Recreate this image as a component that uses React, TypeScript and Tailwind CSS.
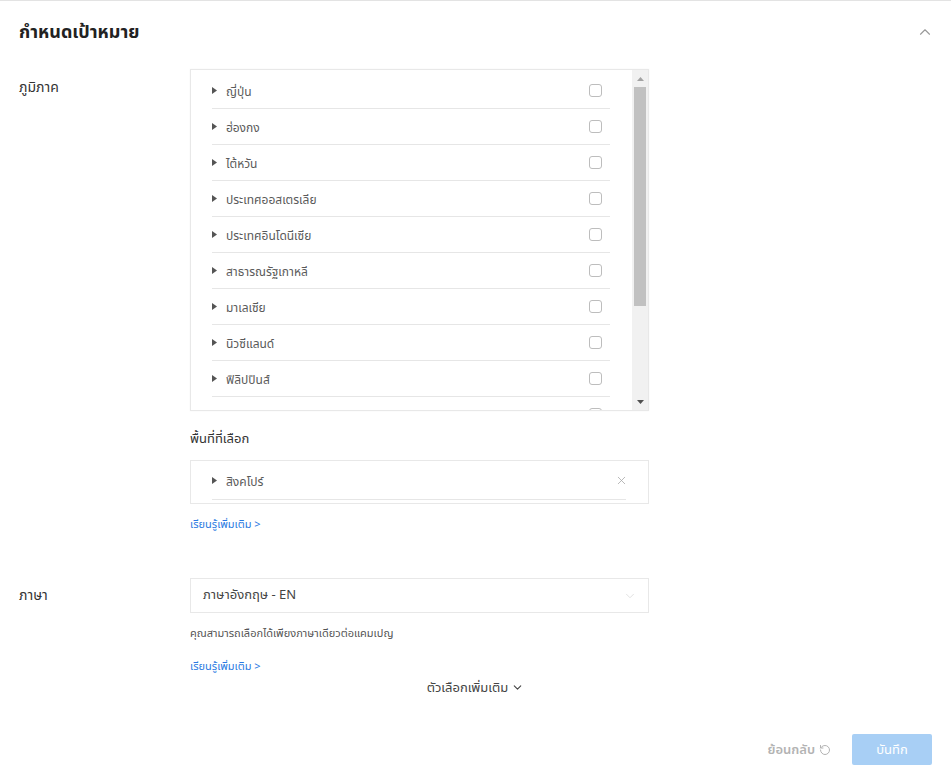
import { ChevronUp, ChevronDown, X, RotateCcw } from "lucide-react";

const regions = [
  "ญี่ปุ่น",
  "ฮ่องกง",
  "ไต้หวัน",
  "ประเทศออสเตรเลีย",
  "ประเทศอินโดนีเซีย",
  "สาธารณรัฐเกาหลี",
  "มาเลเซีย",
  "นิวซีแลนด์",
  "ฟิลิปปินส์",
  "สิงคโปร์",
];

function Caret() {
  return (
    <svg width="5" height="7" viewBox="0 0 5 7" className="shrink-0">
      <path d="M0 0 L5 3.5 L0 7 Z" fill="#555" />
    </svg>
  );
}

export default function App() {
  return (
    <main
      className="min-h-screen bg-white border-t border-[#e3e3e3] text-[#333]"
      style={{ fontFamily: '"Noto Sans", "Noto Sans Thai", "Noto Sans CJK SC", sans-serif' }}
    >
      {/* หัวข้อ */}
      <header className="h-[61px] flex items-center justify-between pl-[19px] pr-[17px]">
        <h1 className="text-[18px] font-bold text-[#222]">กำหนดเป้าหมาย</h1>
        <ChevronUp size={18} strokeWidth={1.5} className="text-[#999]" />
      </header>

      {/* ภูมิภาค */}
      <section className="flex mt-[7px]">
        <div className="w-[190px] shrink-0 pl-[19px] pt-[7px] text-[14px]">ภูมิภาค</div>
        <div className="w-[459px]">
          <div className="h-[342px] border border-[#e8e8e8] flex overflow-hidden shadow-[0_0_2px_rgba(0,0,0,0.04)]">
            <div className="flex-1 pl-[21px] pr-[22px] pt-[3px] overflow-hidden">
              {regions.map((r) => (
                <div key={r} className="h-[36px] flex items-center border-b border-[#e6e6e6] pr-[8px]">
                  <Caret />
                  <span className="ml-[9px] text-[12px] text-[#5a5a5a] flex-1 pt-[2px]">{r}</span>
                  <span className="w-[13px] h-[13px] rounded-[3px] border border-[#bdbdbd] bg-white" />
                </div>
              ))}
            </div>
            {/* แถบเลื่อน */}
            <div className="w-[16px] bg-[#f1f1f1] flex flex-col items-center">
              <div className="h-[17px] flex items-center justify-center">
                <svg width="7" height="4" viewBox="0 0 7 4">
                  <path d="M0 4 L3.5 0 L7 4 Z" fill="#a3a3a3" />
                </svg>
              </div>
              <div className="w-[12px] h-[219px] bg-[#c1c1c1]" />
              <div className="flex-1" />
              <div className="h-[17px] flex items-center justify-center">
                <svg width="7" height="4" viewBox="0 0 7 4">
                  <path d="M0 0 L3.5 4 L7 0 Z" fill="#505050" />
                </svg>
              </div>
            </div>
          </div>

          <div className="mt-[17px] text-[13px] leading-[20px]">พื้นที่ที่เลือก</div>

          <div className="mt-[12px] h-[44px] border border-[#e8e8e8] pl-[21px] pr-[22px]">
            <div className="h-[39px] flex items-center border-b border-[#e6e6e6]">
              <Caret />
              <span className="ml-[9px] text-[12px] text-[#5a5a5a] flex-1 pt-[3px]">สิงคโปร์</span>
              <X size={13} strokeWidth={1.5} className="text-[#aaa] -mr-[2px]" />
            </div>
          </div>

          <a className="block mt-[12px] text-[11px] leading-[16px] text-[#2a7ae2]">เรียนรู้เพิ่มเติม &gt;</a>
        </div>
      </section>

      {/* ภาษา */}
      <section className="flex mt-[46px]">
        <div className="w-[190px] shrink-0 pl-[19px] pt-[6px] text-[14px]">ภาษา</div>
        <div className="w-[459px]">
          <div className="h-[35px] border border-[#e8e8e8] flex items-center justify-between pl-[12px] pr-[11px]">
            <span className="text-[13px] text-[#444] -mt-[2px]">ภาษาอังกฤษ - EN</span>
            <ChevronDown size={14} strokeWidth={1.5} className="text-[#ddd]" />
          </div>
          <div className="mt-[12px] text-[11px] leading-[16px] text-[#555]">
            คุณสามารถเลือกได้เพียงภาษาเดียวต่อแคมเปญ
          </div>
          <a className="block mt-[17px] text-[11px] leading-[16px] text-[#2a7ae2]">เรียนรู้เพิ่มเติม &gt;</a>
        </div>
      </section>

      <div className="mt-[4px] flex justify-center items-center gap-[3px] text-[13px] leading-[18px] text-[#444]">
        ตัวเลือกเพิ่มเติม
        <ChevronDown size={13} strokeWidth={2} />
      </div>

      {/* ปุ่มด้านล่าง */}
      <footer className="mt-[38px] flex justify-end items-center pr-[19px] gap-[21px]">
        <button className="flex items-center gap-[4px] text-[13px] font-semibold text-[#b3b3b3]">
          ย้อนกลับ
          <RotateCcw size={12} strokeWidth={2} />
        </button>
        <button className="w-[80px] h-[31px] rounded-[2px] bg-[#a8cff5] text-white text-[13px]">บันทึก</button>
      </footer>
    </main>
  );
}
